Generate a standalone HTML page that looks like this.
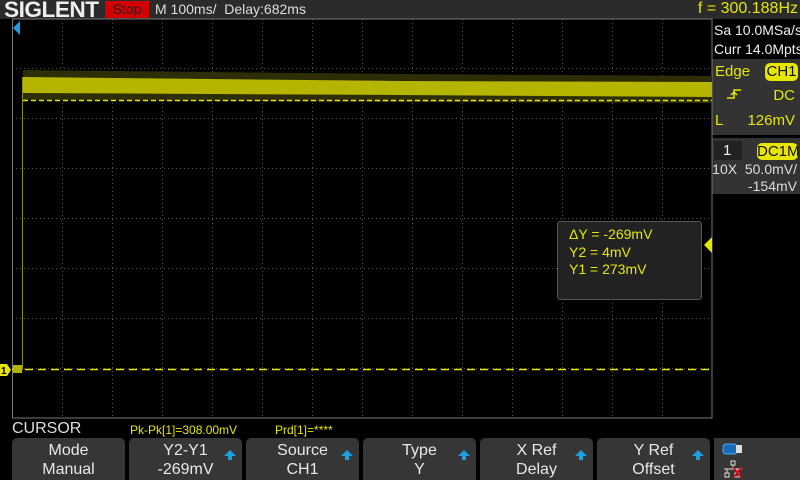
<!DOCTYPE html>
<html><head><meta charset="utf-8"><style>
*{margin:0;padding:0;box-sizing:border-box}
body{width:800px;height:480px;background:#000;overflow:hidden;position:relative;font-family:"Liberation Sans",sans-serif;}
.a{position:absolute;white-space:nowrap}
.top{left:0;top:0;width:800px;height:19px;background:#2b2b2b}
.sk{position:absolute;top:438px;height:42px;background:#363636;border-radius:5px 5px 0 0;color:#e8e8e8;font-size:16px;text-align:center;line-height:19px;padding-top:3px}
.arr{position:absolute;right:6px;top:12px;width:0;height:0;border-left:6px solid transparent;border-right:6px solid transparent;border-bottom:6px solid #1ea0e0}
.arr:after{content:"";position:absolute;left:-2px;top:6px;width:4px;height:4px;background:#1ea0e0}
.y{color:#e6e600}
</style></head><body>
<div class="a top"></div>
<div class="a" style="left:4px;top:-3px;font-size:22px;font-weight:bold;color:#eee;letter-spacing:-0.5px;transform:scaleX(1.03);transform-origin:left">SIGLENT</div>
<div class="a" style="left:105px;top:1px;width:44px;height:17px;background:#d40000;color:#222;font-size:14px;text-align:center;line-height:17px">Stop</div>
<div class="a" style="left:155px;top:1px;font-size:14px;color:#ddd">M 100ms/&nbsp; Delay:682ms</div>
<div class="a y" style="right:2px;top:0px;font-size:16px">f = 300.188Hz</div>

<div class="a" style="left:712px;top:19px;width:88px;height:419px;background:#000"></div>
<div class="a" style="left:714px;top:21px;font-size:14px;color:#eee;line-height:19px">Sa 10.0MSa/s<br>Curr 14.0Mpts</div>
<div class="a" style="left:712px;top:59px;width:88px;height:76px;background:#333"></div>
<div class="a y" style="left:715px;top:63px;font-size:15px">Edge</div>
<div class="a" style="left:765px;top:63px;width:33px;height:18px;background:#e6e600;border-radius:5px;color:#111;font-size:15px;text-align:center;line-height:18px">CH1</div>
<svg class="a" style="left:726px;top:87px" width="16" height="14"><path d="M1 11H8V3H15" stroke="#e6e600" fill="none" stroke-width="1.5"/><path d="M5 8L8 5L11 8" stroke="#e6e600" fill="none" stroke-width="1.5"/></svg>
<div class="a y" style="right:5px;top:87px;font-size:15px">DC</div>
<div class="a y" style="left:715px;top:112px;font-size:15px">L</div>
<div class="a y" style="right:5px;top:112px;font-size:15px">126mV</div>
<div class="a" style="left:712px;top:138px;width:88px;height:56px;background:#333"></div>
<div class="a" style="left:714px;top:141px;width:28px;height:19px;background:#222;color:#eee;font-size:15px;line-height:19px;padding-left:9px">1</div>
<div class="a" style="left:757px;top:143px;width:41px;height:17px;background:#e6e600;border-radius:5px;color:#111;font-size:15px;text-align:center;line-height:17px">DC1M</div>
<div class="a" style="right:3px;top:161px;font-size:14px;color:#ddd;text-align:right;line-height:17px">10X&nbsp; 50.0mV/<br>-154mV</div>

<svg class="a" style="left:0;top:0" width="800" height="480">
<g stroke="#555" stroke-width="1" stroke-dasharray="1,3">
<line x1="62.5" y1="19" x2="62.5" y2="418"/><line x1="112.5" y1="19" x2="112.5" y2="418"/><line x1="162.5" y1="19" x2="162.5" y2="418"/><line x1="212.5" y1="19" x2="212.5" y2="418"/><line x1="262.5" y1="19" x2="262.5" y2="418"/><line x1="312.5" y1="19" x2="312.5" y2="418"/><line x1="362.5" y1="19" x2="362.5" y2="418"/><line x1="412.5" y1="19" x2="412.5" y2="418"/><line x1="462.5" y1="19" x2="462.5" y2="418"/><line x1="512.5" y1="19" x2="512.5" y2="418"/><line x1="562.5" y1="19" x2="562.5" y2="418"/><line x1="612.5" y1="19" x2="612.5" y2="418"/><line x1="662.5" y1="19" x2="662.5" y2="418"/>
<line x1="12" y1="68.5" x2="712" y2="68.5"/><line x1="12" y1="118.5" x2="712" y2="118.5"/><line x1="12" y1="168.5" x2="712" y2="168.5"/><line x1="12" y1="218.5" x2="712" y2="218.5"/><line x1="12" y1="268.5" x2="712" y2="268.5"/><line x1="12" y1="318.5" x2="712" y2="318.5"/><line x1="12" y1="368.5" x2="712" y2="368.5"/>
</g>
<rect x="12.5" y="19" width="699.5" height="399" fill="none" stroke="#777" stroke-width="1"/>
<polygon points="23,70 400,74 712,76 712,103 400,102 23,100" fill="#2e2e06"/>
<polygon points="23,77 400,81 712,82 712,97 400,95 23,93" fill="#b5b500"/>
<line x1="23" y1="100.5" x2="712" y2="100.5" stroke="#e6e600" stroke-width="1.5" stroke-dasharray="5,3"/>
<line x1="22.5" y1="77" x2="22.5" y2="370" stroke="#8a8a00"/>
<line x1="12" y1="369.5" x2="712" y2="369.5" stroke="#e6e600" stroke-width="1.5" stroke-dasharray="8,5"/>
<rect x="13" y="365" width="9" height="8" fill="#b5b500"/>
<polygon points="0,364 7,364 11,370 7,376 0,376" fill="#e6e600"/>
<text x="1" y="374" font-size="10" font-weight="bold" fill="#000" font-family="Liberation Sans">1</text>
<polygon points="13,28 20,21 20,35" fill="#1ea0e0"/>
<polygon points="712,237 704,245 712,253" fill="#e6e600"/>
</svg>
<div class="a" style="left:557px;top:221px;width:145px;height:79px;background:#222;border:1px solid #555;border-radius:3px"></div>
<div class="a y" style="left:569px;top:226px;font-size:14px;line-height:17.5px">ΔY = -269mV<br>Y2 = 4mV<br>Y1 = 273mV</div>

<div class="a" style="left:12px;top:420px;font-size:16px;color:#ddd">CURSOR</div>
<div class="a y" style="left:130px;top:423px;font-size:12px">Pk-Pk[1]=308.00mV</div>
<div class="a y" style="left:275px;top:423px;font-size:12px">Prd[1]=****</div>

<div class="sk" style="left:12px;width:113px">Mode<br>Manual</div>
<div class="sk" style="left:129px;width:113px">Y2-Y1<br>-269mV<span class="arr"></span></div>
<div class="sk" style="left:246px;width:113px">Source<br>CH1<span class="arr"></span></div>
<div class="sk" style="left:363px;width:113px">Type<br>Y<span class="arr"></span></div>
<div class="sk" style="left:480px;width:113px">X Ref<br>Delay<span class="arr"></span></div>
<div class="sk" style="left:597px;width:113px">Y Ref<br>Offset<span class="arr"></span></div>
<div class="a" style="left:714px;top:438px;width:86px;height:42px;background:#363636"></div>
<svg class="a" style="left:720px;top:440px" width="30" height="40">
<rect x="3" y="4" width="14" height="10" rx="3" fill="#1a6ab8" stroke="#4af" stroke-width="1"/>
<rect x="16" y="5" width="6" height="8" fill="#ddd"/>
<g stroke="#ddd" fill="none"><rect x="11" y="21" width="4" height="4"/><line x1="13" y1="25" x2="13" y2="29"/><line x1="4" y1="29" x2="22" y2="29"/><line x1="7" y1="29" x2="7" y2="33"/><line x1="17" y1="29" x2="17" y2="33"/><rect x="5" y="33" width="4" height="4"/><rect x="15" y="33" width="4" height="4"/></g>
<g stroke="#e00" stroke-width="1.5"><line x1="13" y1="27" x2="22" y2="38"/><line x1="22" y1="27" x2="13" y2="38"/></g>
</svg>
</body></html>
